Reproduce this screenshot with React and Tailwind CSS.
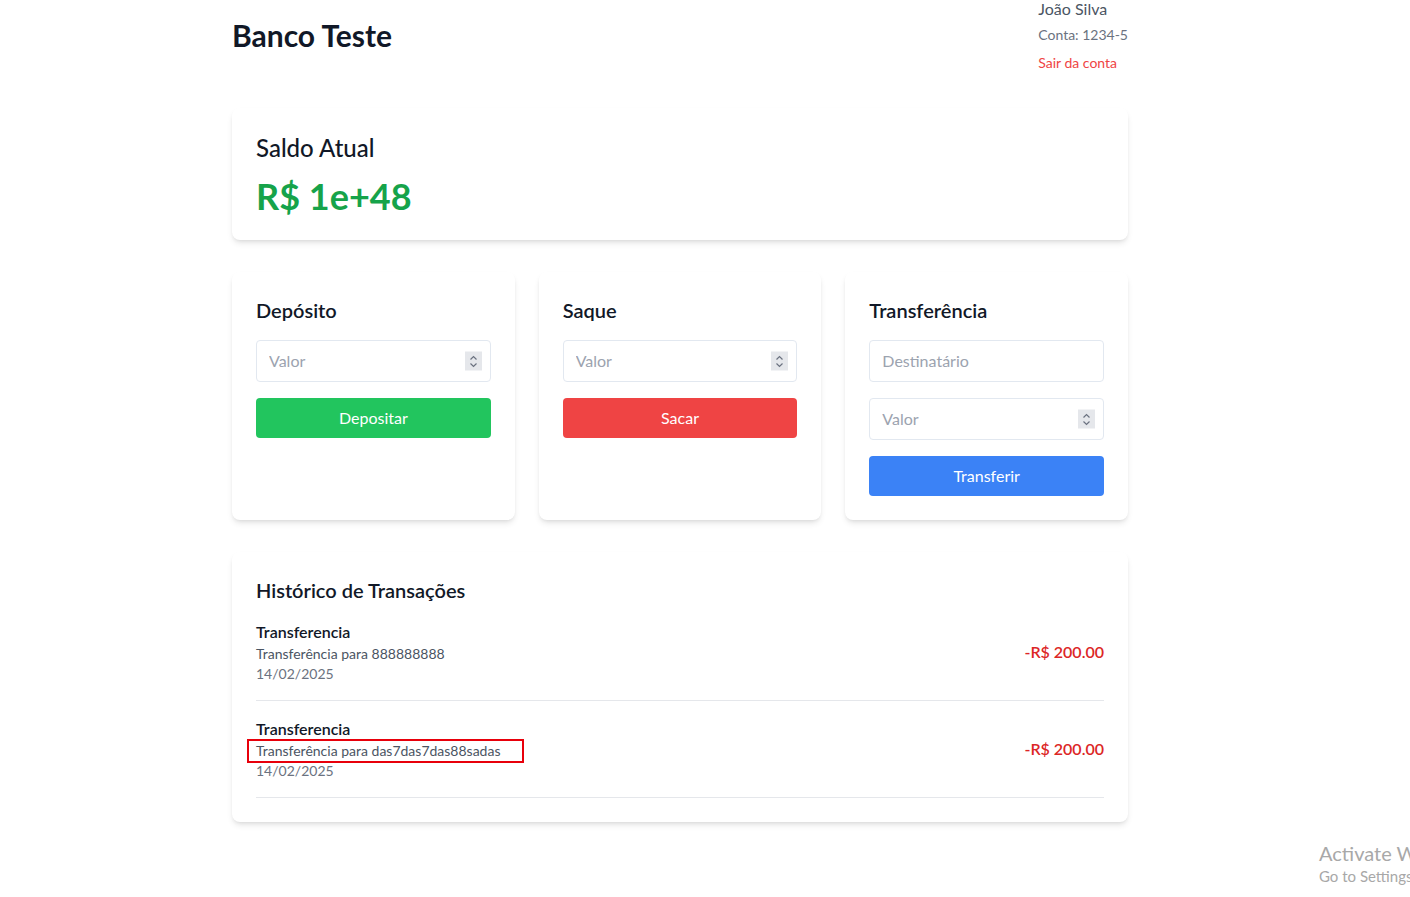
import React, { useState } from 'react';

const transactions = [
    { id: 1, type: 'Transferencia', description: 'Transferência para 888888888', date: '14/02/2025', amount: '-R$ 200.00' },
    { id: 2, type: 'Transferencia', description: 'Transferência para das7das7das88sadas', date: '14/02/2025', amount: '-R$ 200.00', marked: true },
];

function NumberField({ placeholder }) {
    return (
        <div className="relative">
            <input
                type="text"
                placeholder={placeholder}
                className="w-full border border-[#e2e8f0] rounded px-3 py-2 text-base text-gray-800 placeholder:text-[#9ca3af] outline-none"
            />
            {/* spinner like the browser draws for type=number */}
            <div className="absolute right-[9px] top-1/2 -translate-y-1/2 w-[17px] h-[19px] bg-[#e5e7eb] flex flex-col items-center justify-center">
                <svg width="9" height="14" viewBox="0 0 9 14" fill="none" stroke="#6b7280" strokeWidth="1.2">
                    <path d="M1.5 5 L4.5 2 L7.5 5" />
                    <path d="M1.5 9 L4.5 12 L7.5 9" />
                </svg>
            </div>
        </div>
    );
}

export default function App() {
    const [deposit, setDeposit] = useState('');

    return (
        <div className="min-h-screen bg-white text-[#111827] relative overflow-hidden" style={{ fontFamily: 'Lato, "Noto Sans", sans-serif' }}>
            <div className="w-[1360px]">
                <div className="max-w-4xl mx-auto">
                    <header className="h-[70px] flex justify-between items-center mb-[38px]">
                        <h1 className="text-3xl font-bold">Banco Teste</h1>
                        <div className="flex flex-col">
                            <span className="text-base text-[#4b5563]">João Silva</span>
                            <span className="text-sm text-[#6b7280] mt-1">Conta: 1234-5</span>
                            <button className="text-sm text-[#ef4444] text-left mt-2">Sair da conta</button>
                        </div>
                    </header>

                    <div className="bg-white rounded-lg shadow-md p-6 mb-8">
                        <h2 className="text-2xl font-medium mb-3">Saldo Atual</h2>
                        <p className="text-4xl font-bold text-[#16a34a]">R$ 1e+48</p>
                    </div>

                    <div className="grid grid-cols-3 gap-6 mb-8">
                        <div className="bg-white rounded-lg shadow-md p-6">
                            <h2 className="text-xl font-semibold mb-4">Depósito</h2>
                            <div className="space-y-4">
                                <NumberField placeholder="Valor" />
                                <button onClick={() => setDeposit('')} className="w-full bg-[#22c55e] text-white rounded py-2">Depositar</button>
                            </div>
                        </div>
                        <div className="bg-white rounded-lg shadow-md p-6">
                            <h2 className="text-xl font-semibold mb-4">Saque</h2>
                            <div className="space-y-4">
                                <NumberField placeholder="Valor" />
                                <button className="w-full bg-[#ef4444] text-white rounded py-2">Sacar</button>
                            </div>
                        </div>
                        <div className="bg-white rounded-lg shadow-md p-6">
                            <h2 className="text-xl font-semibold mb-4">Transferência</h2>
                            <div className="space-y-4">
                                <input
                                    type="text"
                                    placeholder="Destinatário"
                                    className="w-full border border-[#e2e8f0] rounded px-3 py-2 text-base placeholder:text-[#9ca3af] outline-none"
                                />
                                <NumberField placeholder="Valor" />
                                <button className="w-full bg-[#3b82f6] text-white rounded py-2">Transferir</button>
                            </div>
                        </div>
                    </div>

                    <div className="bg-white rounded-lg shadow-md p-6">
                        <h2 className="text-xl font-semibold">Histórico de Transações</h2>
                        <div>
                            {transactions.map(t => (
                                <div key={t.id} className="flex justify-between items-center py-4 border-b border-[#e5e7eb]">
                                    <div>
                                        <p className="font-semibold">{t.type}</p>
                                        <p className="text-sm text-[#4b5563] relative">
                                            {t.description}
                                            {t.marked && (
                                                <span className="absolute left-[-9px] right-[-24px] top-[-2px] bottom-[-2px] border-2 border-[#e8000b]"></span>
                                            )}
                                        </p>
                                        <p className="text-sm text-[#6b7280]">{t.date}</p>
                                    </div>
                                    <span className="font-semibold text-[#dc2626]">{t.amount}</span>
                                </div>
                            ))}
                        </div>
                    </div>
                </div>
            </div>

            {/* OS watermark */}
            <div className="absolute left-[1319px] top-[839px] whitespace-nowrap text-[#a8a8a8] leading-tight">
                <p className="text-xl">Activate Windows</p>
                <p className="text-[15px]">Go to Settings to activate Windows.</p>
            </div>
        </div>
    );
}
